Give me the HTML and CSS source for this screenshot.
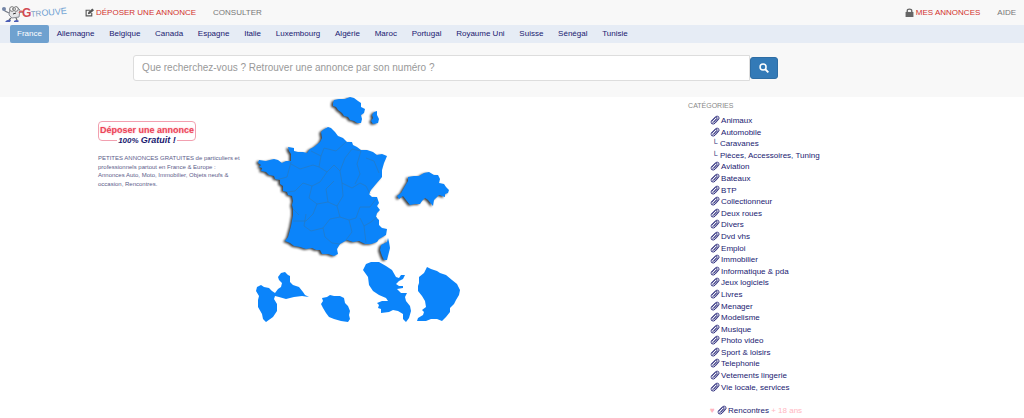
FILE: index.html
```html
<!DOCTYPE html>
<html lang="fr">
<head>
<meta charset="utf-8">
<meta name="viewport" content="width=device-width, initial-scale=1">
<title>Gtrouve - Petites annonces gratuites</title>
<link rel="stylesheet" href="styles.css">
</head>
<body>
<svg class="defs" aria-hidden="true">
  <symbol id="clip" viewBox="0 0 18 18">
    <path d="M2 11 10 3q3-2 5.500 0 2 3-.5 5.500l-6 6.500q-3 2.500-6 .5-2-2 .5-4.500l7-7q2-1 2.500 1.500l-6 7M4 15l8-8M8 15l7-8" fill="none" stroke="currentColor" stroke-width="1.4" stroke-linecap="round"/>
  </symbol>
</svg>
<header class="topbar">
  <a class="logo" href="#" aria-label="Gtrouve">
    <svg viewBox="0 0 70 25" class="logo-art">
      <path d="M10 9 17 7l3 3-1 7-7 1-3-3z" fill="#e4e5e7" stroke="#8a8e96"/>
      <circle cx="12" cy="9" r="2.300" fill="#fff" stroke="#777"/>
      <circle cx="16" cy="9" r="2.300" fill="#fff" stroke="#777"/>
      <path d="M12 9h1M15 9h1M13 14l3-1" stroke="#333"/>
      <path d="M9 13 5 11 3 8M19 12l4 0" fill="none" stroke="#777c86" stroke-width="1.300"/>
      <circle cx="4" cy="9" r="2" fill="#7486a7"/>
      <path d="M11 18 9 20M16 18l1 2" stroke="#666" stroke-width="1.300"/>
      <path d="M5 22q2-3 6-2l-1 2zM14 21q3-2 5 0l-1 1h-4z" fill="#4a5cb4"/>
      <path d="M19 13q2-3 4-1" fill="none" stroke="#d66" stroke-width="1.400"/>
      <text x="22" y="17" class="logo-g">G</text>
      <text x="31" y="17" class="logo-t" transform="rotate(-5 31 17)">TR<tspan class="logo-v">OUVE</tspan></text>
    </svg>
  </a>
  <nav class="menu">
    <a class="hot" href="#"><svg class="icon" viewBox="0 0 16 16"><path d="M12 9v5H2V4h7" fill="none" stroke="#555" stroke-width="2"/><path d="m5 11 1-4 7-6 3 3-7 6z" fill="#555"/></svg>DÉPOSER UNE ANNONCE</a>
    <a href="#">CONSULTER</a>
  </nav>
  <nav class="menu account">
    <a class="hot" href="#"><svg class="icon" viewBox="0 0 16 16"><path d="M1 7h14v9H1z" fill="#666"/><path d="M4 8V5q0-3 4-3t4 3v3" fill="none" stroke="#666" stroke-width="2.400"/></svg>MES ANNONCES</a>
    <a href="#">AIDE</a>
  </nav>
</header>
<nav class="countries">
  <a class="active" href="#">France</a>
  <a href="#">Allemagne</a>
  <a href="#">Belgique</a>
  <a href="#">Canada</a>
  <a href="#">Espagne</a>
  <a href="#">Italie</a>
  <a href="#">Luxembourg</a>
  <a href="#">Algérie</a>
  <a href="#">Maroc</a>
  <a href="#">Portugal</a>
  <a href="#">Royaume Uni</a>
  <a href="#">Suisse</a>
  <a href="#">Sénégal</a>
  <a href="#">Tunisie</a>
</nav>
<form class="search">
  <input type="text" aria-label="Recherche" placeholder="Que recherchez-vous ? Retrouver une annonce par son numéro ?">
  <button type="button" aria-label="Rechercher"><svg viewBox="0 0 16 16"><circle cx="6.500" cy="6.500" r="4.800" fill="none" stroke="#fff" stroke-width="2.400"/><path d="m10 10 5 5" stroke="#fff" stroke-width="3"/></svg></button>
</form>
<main class="content">
  <section class="promo">
    <a class="deposit" href="#"><span class="deposit-title">Déposer une annonce</span><span class="free">100% <b>Gratuit !</b></span></a>
    <p>PETITES ANNONCES GRATUITES de particuliers et professionnels partout en France &amp; Europe : Annonces Auto, Moto, Immobilier, Objets neufs &amp; occasion, Rencontres.</p>
  </section>
  <section class="map">
    <svg viewBox="250 97 220 230" role="img" aria-label="Carte">
      <g class="land shaded">
        <path d="M333 103 334 100 339 99 345 99 350 97 354 98 358 101 361 103 361 107 365 109 364 113 361 115 362 119 361 123 357 123 354 121 350 120 348 117 344 116 342 113 338 110 336 107 333 106z"/>
        <path d="M372 115 374 112 377 111 377 115 379 119 378 123 373 124 371 121 373 118z"/>
        <path d="M331 128 328 127 323 130 321 132 322 138 320 142 314 147 310 149 307 153 303 152 298 152 294 151 294 148 288 147 289 151 291 154 291 161 286 161 282 163 278 160 274 159 266 161 259 160 258 163 261 165 259 167 262 168 261 171 266 172 269 175 274 176 275 179 280 180 280 184 283 186 283 191 287 192 288 195 292 196 293 201 292 205 293 209 293 215 291 226 288 237 285 241 290 243 294 246 300 247 306 249 312 248 316 250 320 250 322 254 328 254 334 256 338 254 337 249 340 244 347 240 353 242 359 241 365 244 371 244 377 242 379 239 386 235 387 229 382 228 379 225 379 220 376 217 377 213 380 210 377 206 379 203 377 197 372 197 369 194 371 190 376 184 382 177 382 170 384 163 387 156 382 154 377 155 373 152 367 150 361 150 357 147 353 145 352 142 347 142 343 138 338 136 335 132z"/>
        <path d="M388 238 389 242 390 248 388 256 387 260 384 260 382 256 380 250 381 245 387 242z"/>
        <path d="M399 199 397 196 401 193 405 186 408 181 408 177 414 176 419 176 424 173 429 172 434 175 438 175 440 179 439 183 444 184 446 187 449 190 448 193 445 194 445 197 439 195 436 198 434 200 433 206 428 200 425 198 422 201 420 204 415 204 410 205 406 200 403 196z"/>
      </g>
      <path class="borders" d="M311 151l10 5 3-8 12 3 10-9M321 156l-2 11 8 5 7-7 6 6 5-13 7-9 9 2M276 180l11-3 4-15M291 164l9 5 13-4 6 2M287 192l8-1 8-8 9 3 8-4 7-10M340 171l2 12 10 5 8-5 6 3 4 8M361 151l-4 13 3 10-5 10M366 158l8 3 5 12M312 186l-3 12 8 6-4 10-7 7-13 0M317 204l11-2 9 4 6-10-1-13M337 206l3 11 9 3 7-2 4-11 10 0 6-8M306 214l-2 12 7 5 12-3 7-9 10-2M323 228l2 9 7 6 8 1M349 220l3 12-6 8M360 218l4 8 7-4 6-5M364 226l2 17M293 209l6 6M328 202l-2-13 8-8"/>
      <g class="land">
        <path d="M256 291 257 287 261 285 264 287 269 288 272 291 275 293 278 289 281 287 282 283 279 280 278 277 281 273 285 272 288 275 290 276 290 282 293 285 299 287 303 292 305 295 309 297 302 296 294 297 286 299 279 297 275 296 274 299 277 304 277 311 273 317 266 322 263 319 262 314 258 307 258 300 259 296z"/>
        <path d="M321 304 323 301 322 298 327 297 330 295 334 296 340 296 344 298 345 303 348 306 350 311 349 315 350 319 348 322 341 321 334 319 329 317 326 313 323 308z"/>
        <path d="M363 270 366 264 371 262 379 262 386 266 392 270 396 277 399 278 401 275 405 275 403 279 399 281 396 284 399 286 403 286 403 288 397 289 401 293 407 293 405 297 406 301 410 306 411 311 409 318 406 322 403 319 403 314 398 311 393 310 389 312 381 313 381 309 378 308 379 305 377 303 382 301 388 301 386 298 379 295 373 291 369 285 368 277z"/>
        <path d="M427 267 431 269 437 271 440 273 446 275 452 280 457 284 460 290 459 295 456 300 454 304 450 308 450 312 446 317 442 321 437 319 431 319 426 321 417 321 418 318 423 315 424 312 422 310 426 307 425 301 422 296 418 291 418 286 419 283 419 277 424 273z"/>
      </g>
    </svg>
  </section>
  <aside class="categories">
    <h2>CATÉGORIES</h2>
    <ul>
      <li><a href="#"><svg class="clip"><use href="#clip"/></svg>Animaux</a></li>
      <li><a href="#"><svg class="clip"><use href="#clip"/></svg>Automobile</a></li>
      <li class="sub"><a href="#">└ Caravanes</a></li>
      <li class="sub"><a href="#">└ Pièces, Accessoires, Tuning</a></li>
      <li><a href="#"><svg class="clip"><use href="#clip"/></svg>Aviation</a></li>
      <li><a href="#"><svg class="clip"><use href="#clip"/></svg>Bateaux</a></li>
      <li><a href="#"><svg class="clip"><use href="#clip"/></svg>BTP</a></li>
      <li><a href="#"><svg class="clip"><use href="#clip"/></svg>Collectionneur</a></li>
      <li><a href="#"><svg class="clip"><use href="#clip"/></svg>Deux roues</a></li>
      <li><a href="#"><svg class="clip"><use href="#clip"/></svg>Divers</a></li>
      <li><a href="#"><svg class="clip"><use href="#clip"/></svg>Dvd vhs</a></li>
      <li><a href="#"><svg class="clip"><use href="#clip"/></svg>Emploi</a></li>
      <li><a href="#"><svg class="clip"><use href="#clip"/></svg>Immobilier</a></li>
      <li><a href="#"><svg class="clip"><use href="#clip"/></svg>Informatique &amp; pda</a></li>
      <li><a href="#"><svg class="clip"><use href="#clip"/></svg>Jeux logiciels</a></li>
      <li><a href="#"><svg class="clip"><use href="#clip"/></svg>Livres</a></li>
      <li><a href="#"><svg class="clip"><use href="#clip"/></svg>Menager</a></li>
      <li><a href="#"><svg class="clip"><use href="#clip"/></svg>Modelisme</a></li>
      <li><a href="#"><svg class="clip"><use href="#clip"/></svg>Musique</a></li>
      <li><a href="#"><svg class="clip"><use href="#clip"/></svg>Photo video</a></li>
      <li><a href="#"><svg class="clip"><use href="#clip"/></svg>Sport &amp; loisirs</a></li>
      <li><a href="#"><svg class="clip"><use href="#clip"/></svg>Telephonie</a></li>
      <li><a href="#"><svg class="clip"><use href="#clip"/></svg>Vetements lingerie</a></li>
      <li><a href="#"><svg class="clip"><use href="#clip"/></svg>Vie locale, services</a></li>
      <li class="adult"><span class="pink">♥ </span><a href="#"><svg class="clip"><use href="#clip"/></svg>Rencontres</a><span class="pink"> + 18 ans</span></li>
    </ul>
  </aside>
</main>
</body>
</html>
```
FILE: styles.css
```css
* { box-sizing: border-box; }
body {
  margin: 0;
  background: #fff;
  color: #191970;
  font-family: "Liberation Sans", Arial, sans-serif;
  font-size: 8px;
}
a { color: inherit; text-decoration: none; }
.defs { display: none; }

.topbar {
  display: flex;
  align-items: center;
  height: 25px;
  padding-right: 8px;
  background: #f8f8f8;
}
.logo { width: 85px; height: 25px; }
.logo-art { display: block; width: 70px; height: 25px; }
.logo-g { font: bold 12px "Liberation Sans", sans-serif; fill: #d24a52; }
.logo-t { font: 8px "Liberation Sans", sans-serif; fill: #7f9fc4; }
.logo-v { font-size: 9px; fill: #6d9fd2; }
.menu { display: flex; gap: 17px; color: #777; }
.menu a { display: flex; align-items: center; gap: 2px; }
.menu .hot { color: #d2322d; }
.account { margin-left: auto; }
.icon { width: 9px; height: 9px; }

.countries {
  display: flex;
  justify-content: space-between;
  height: 18px;
  padding: 0 38% 0 10px;
  background: #e6ecf5;
}
.countries a { line-height: 18px; padding: 0 7px; white-space: nowrap; }
.countries .active { background: #6fa1cf; color: #fff; border-radius: 2px; }

.search {
  display: flex;
  align-items: center;
  height: 54px;
  padding: 0 24% 5px 13%;
  background: #f8f8f8;
}
.search input {
  flex: 1;
  min-width: 0;
  height: 26px;
  padding: 0 8px;
  border: 1px solid #ddd;
  border-radius: 3px 0 0 3px;
  background: #fff;
  font: 10px "Liberation Sans", Arial, sans-serif;
}
.search input::placeholder { color: #999; opacity: 1; }
.search button {
  display: grid;
  place-items: center;
  width: 28px;
  height: 22px;
  padding: 0;
  border: 1px solid #2e6da4;
  border-radius: 3px;
  background: #337ab7;
}
.search button svg { width: 10px; height: 10px; }

.content { display: grid; grid-template-columns: 25% 42% 1fr; align-items: start; }
.promo { padding: 24px 8px 0 98px; }
.deposit { display: flex; flex-direction: column; width: 98px; }
.deposit-title {
  height: 20px;
  border: 1px solid #f2a0b0;
  border-radius: 4px;
  color: #ec4458;
  font-size: 9px;
  font-weight: bold;
  line-height: 17px;
  text-align: center;
  white-space: nowrap;
  text-shadow: 0 0 2px #f8b0bc;
}
.free {
  align-self: center;
  margin-top: -6px;
  padding: 0 1px;
  background: #fff;
  font-size: 8px;
  font-style: italic;
  font-weight: bold;
  line-height: 11px;
}
.free b { font-size: 9px; }
.promo p { width: 144px; margin: 8px 0 0; color: #5c5c8a; font-size: 6px; line-height: 1.45; }

.map svg { display: block; width: 220px; height: 230px; margin-left: -6px; }
.land { fill: #0b84fa; }
.shaded { filter: drop-shadow(-2px 1px 1px #444); }
.borders { fill: none; stroke: #2b78b8; stroke-width: 1; opacity: .6; }

.categories { padding: 4px 0 0 2px; }
.categories h2 { margin: 0 0 5px; color: #888; font-size: 7px; font-weight: normal; line-height: 9px; }
.categories ul { margin: 0; padding: 0 0 0 22px; list-style: none; line-height: 1.45; }
.categories li { white-space: nowrap; }
.categories .sub { padding-left: 2px; }
.clip { width: 10px; height: 10px; margin-right: 1px; vertical-align: -2px; }
.categories .adult { margin-top: 12px; }
.pink { color: #ffb6c1; }
```
